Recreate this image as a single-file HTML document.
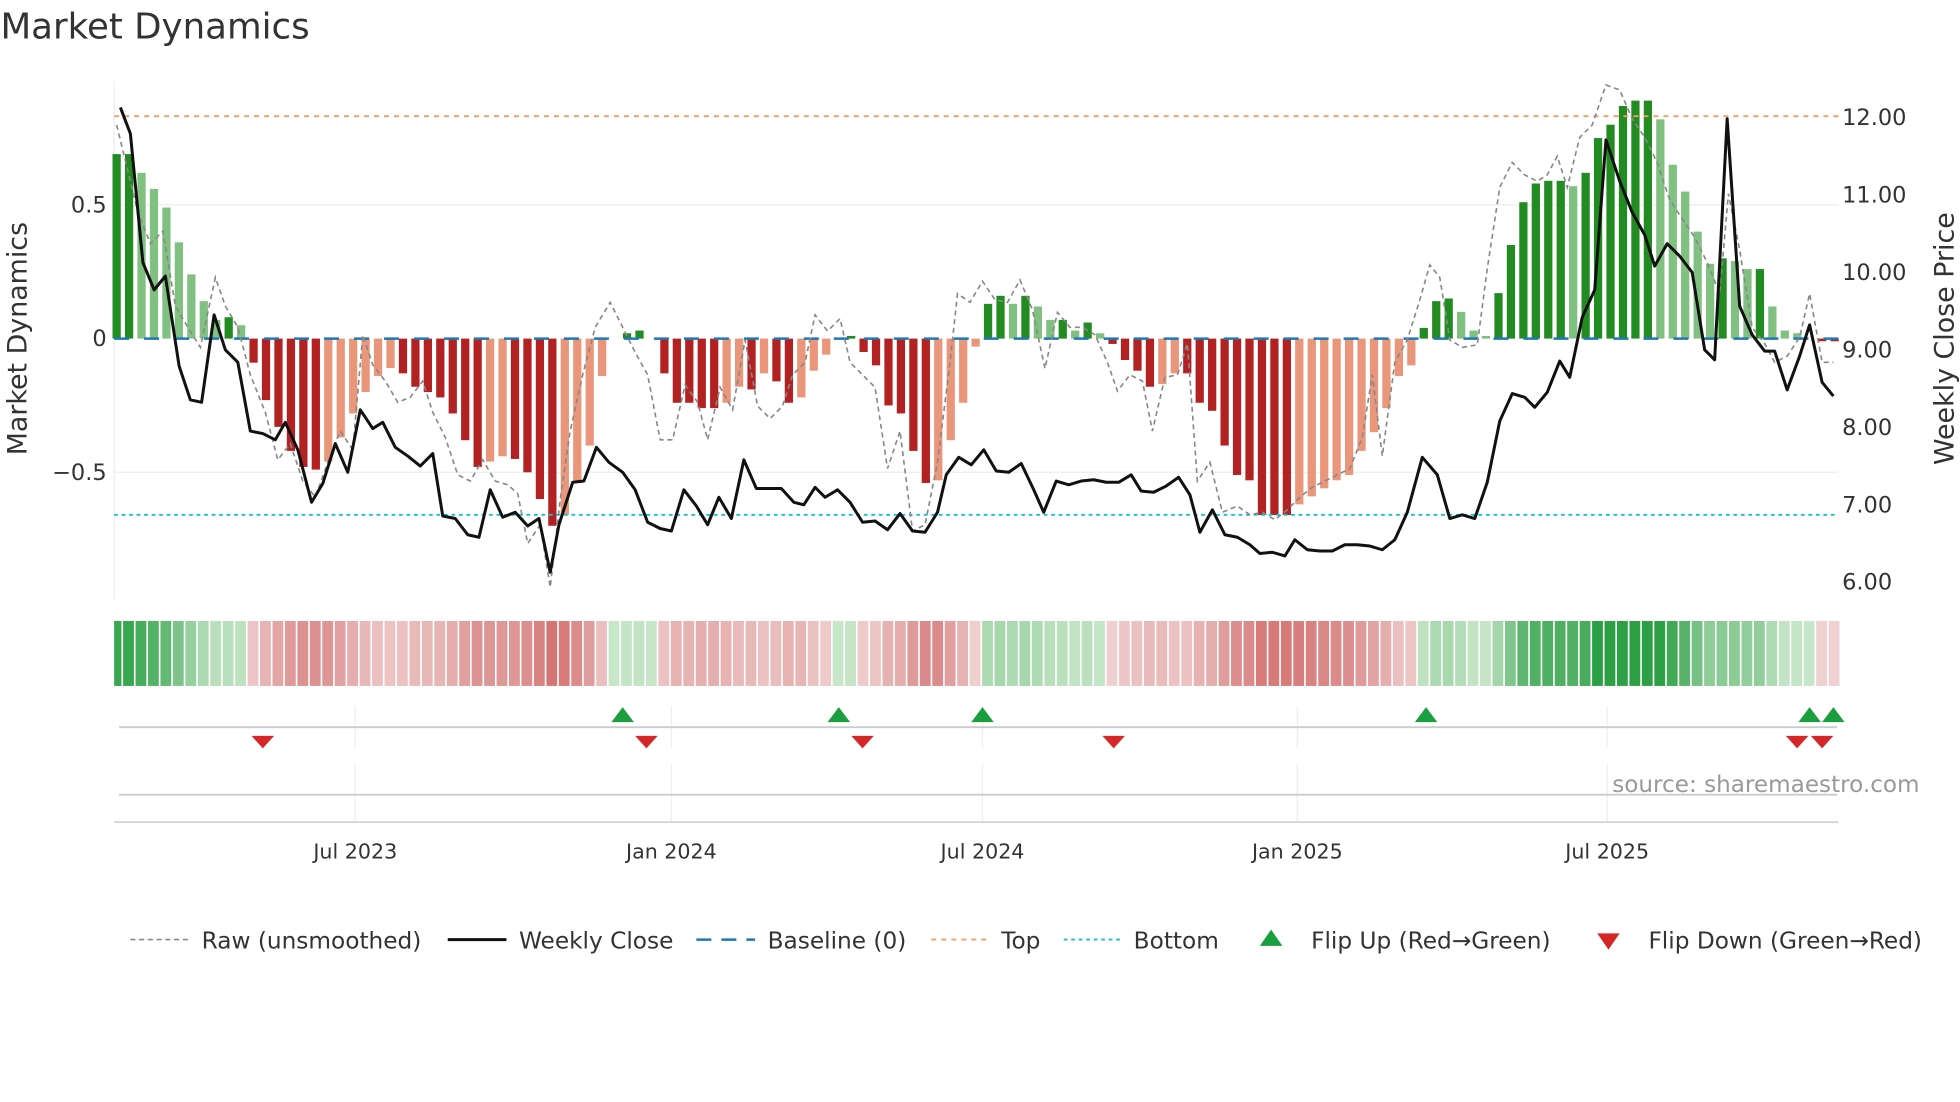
<!DOCTYPE html>
<html><head><meta charset="utf-8"><style>
html,body{margin:0;padding:0;background:#fff;width:1960px;height:1102px;overflow:hidden}
svg{display:block}
text{font-family:"DejaVu Sans","Liberation Sans",sans-serif;fill:#333}
</style></head><body>
<svg id="s" width="1960" height="1102" viewBox="0 0 1568 882">
<text x="0" y="31" font-size="28.5">Market Dynamics</text>
<line x1="91" y1="65" x2="91" y2="480" stroke="#eee"/>
<line x1="91" y1="164" x2="1471" y2="164" stroke="#eee"/>
<line x1="91" y1="378" x2="1471" y2="378" stroke="#eee"/>
<g id="bars"></g>
<line x1="91" y1="93" x2="1471" y2="93" stroke="#f0a060" stroke-width="1.5" stroke-dasharray="4 4"/>
<line x1="91" y1="412" x2="1471" y2="412" stroke="#17becf" stroke-width="1.5" stroke-dasharray="3 3"/>
<line x1="91" y1="271" x2="1471" y2="271" stroke="#1f77b4" stroke-width="2" stroke-dasharray="12 12"/>
<polyline id="raw" fill="none" stroke="#888" stroke-width="1.3" stroke-dasharray="4 3"/>
<polyline id="px" fill="none" stroke="#111" stroke-width="2.4" stroke-linejoin="round"/>
<g font-size="18" text-anchor="end">
<text x="85" y="170">0.5</text><text x="85" y="277">0</text><text x="85" y="384">−0.5</text></g>
<g font-size="18">
<text x="1474" y="100">12.00</text><text x="1474" y="162">11.00</text><text x="1474" y="224">10.00</text>
<text x="1474" y="286">9.00</text><text x="1474" y="348">8.00</text><text x="1474" y="410">7.00</text><text x="1474" y="472">6.00</text></g>
<text transform="translate(21,271) rotate(-90)" font-size="21.5" text-anchor="middle">Market Dynamics</text>
<text transform="translate(1563,271) rotate(-90)" font-size="21.5" text-anchor="middle">Weekly Close Price</text>
<g id="heat"></g>
<g stroke="#eee"><line x1="284" y1="565" x2="284" y2="598"/><line x1="537" y1="565" x2="537" y2="598"/><line x1="786" y1="565" x2="786" y2="598"/><line x1="1038" y1="565" x2="1038" y2="598"/><line x1="1286" y1="565" x2="1286" y2="598"/>
<line x1="284" y1="612" x2="284" y2="658"/><line x1="537" y1="612" x2="537" y2="658"/><line x1="786" y1="612" x2="786" y2="658"/><line x1="1038" y1="612" x2="1038" y2="658"/><line x1="1286" y1="612" x2="1286" y2="658"/></g>
<line x1="95" y1="582" x2="1470" y2="582" stroke="#ccc" stroke-width="1.5"/>
<line x1="95" y1="636" x2="1470" y2="636" stroke="#ccc" stroke-width="1.5"/>
<line x1="91" y1="658" x2="1471" y2="658" stroke="#ccc" stroke-width="1.2"/>
<g id="flips"></g>
<text x="1536" y="634" font-size="18.5" text-anchor="end" style="fill:#999">source: sharemaestro.com</text>
<g font-size="16.5" text-anchor="middle">
<text x="284" y="687">Jul 2023</text><text x="537" y="687">Jan 2024</text><text x="786" y="687">Jul 2024</text><text x="1038" y="687">Jan 2025</text><text x="1286" y="687">Jul 2025</text></g>
<g font-size="18.6">
<line x1="104" y1="752" x2="150" y2="752" stroke="#888" stroke-width="1.3" stroke-dasharray="4 3"/><text x="161" y="759">Raw (unsmoothed)</text>
<line x1="358" y1="752" x2="405" y2="752" stroke="#111" stroke-width="2.4"/><text x="415" y="759">Weekly Close</text>
<line x1="557" y1="752" x2="604" y2="752" stroke="#1f77b4" stroke-width="2" stroke-dasharray="12 8"/><text x="614" y="759">Baseline (0)</text>
<line x1="745" y1="752" x2="791" y2="752" stroke="#f0a060" stroke-width="1.5" stroke-dasharray="4 4"/><text x="801" y="759">Top</text>
<line x1="851" y1="752" x2="897" y2="752" stroke="#17becf" stroke-width="1.5" stroke-dasharray="3 3"/><text x="907" y="759">Bottom</text>
<polygon points="1008,757 1026,757 1017,744" fill="#1a9e40"/><text x="1049" y="759">Flip Up (Red→Green)</text>
<polygon points="1278,747 1296,747 1287,760" fill="#d62728"/><text x="1319" y="759">Flip Down (Green→Red)</text>
</g>
</svg>
<script>
var v=[0.69,0.69,0.62,0.56,0.49,0.36,0.24,0.14,0.07,0.08,0.05,-0.09,-0.23,-0.33,-0.42,-0.48,-0.49,-0.46,-0.37,-0.28,-0.2,-0.14,-0.11,-0.13,-0.18,-0.2,-0.22,-0.28,-0.38,-0.48,-0.46,-0.44,-0.45,-0.5,-0.6,-0.7,-0.66,-0.53,-0.4,-0.14,0,0.02,0.03,0,-0.13,-0.24,-0.24,-0.26,-0.26,-0.24,-0.18,-0.19,-0.13,-0.16,-0.24,-0.22,-0.12,-0.06,0,0.01,-0.05,-0.1,-0.25,-0.28,-0.42,-0.54,-0.53,-0.38,-0.24,-0.03,0.13,0.16,0.13,0.16,0.12,0.07,0.07,0.03,0.06,0.02,-0.02,-0.08,-0.12,-0.18,-0.17,-0.13,-0.13,-0.24,-0.27,-0.4,-0.51,-0.53,-0.66,-0.66,-0.66,-0.62,-0.59,-0.56,-0.53,-0.51,-0.42,-0.35,-0.26,-0.14,-0.1,0.04,0.14,0.15,0.1,0.03,0.01,0.17,0.35,0.51,0.58,0.59,0.59,0.57,0.62,0.75,0.8,0.87,0.89,0.89,0.82,0.65,0.55,0.4,0.28,0.3,0.29,0.26,0.26,0.12,0.03,0.02,0,-0.01,-0.01];
var n=v.length,x0=93,x1=1468,st=(x1-x0)/(n-1),h='',hh='';
for(var i=0;i<n;i++){var a=v[i],p=i?v[i-1]:0,x=x0+i*st,col;
if(a>=0)col=(a>=p)?'#228b22':'#80c080';else col=(a<=p)?'#b22222':'#e9967a';
var y=271-a*214,t=Math.min(y,271),hgt=Math.abs(a*214);
if(hgt>0.5)h+='<rect x="'+(x-3.3)+'" y="'+t+'" width="6.6" height="'+hgt+'" fill="'+col+'"/>';
var m=Math.min(Math.abs(a)/0.75,1),c;
if(a>=0){c='rgb('+Math.round(200-155*m)+','+Math.round(230-70*m)+','+Math.round(201-131*m)+')';}
else{c='rgb('+Math.round(240-30*m)+','+Math.round(210-100*m)+','+Math.round(210-100*m)+')';}
var hx=Math.max(91,x-4.8);
hh+='<rect x="'+hx+'" y="497" width="'+(x-4.8+st-1.3-hx)+'" height="52" fill="'+c+'"/>';}
document.getElementById('bars').innerHTML=h;document.getElementById('heat').innerHTML=hh;
document.getElementById('px').setAttribute('points',"96,86 104,107 114,210 123,232 132,221 143,293 152,320 161,322 171,252 180,280 190,290 200,345 210,347 220,352 228,338 238,360 249,402 258,387 268,355 278,378 288,328 298,343 306,338 316,358 326,365 336,373 346,363 354,413 364,415 374,428 383,430 392,392 402,414 412,410 422,421 431,415 440,458 447,420 458,386 467,385 477,358 487,370 498,378 508,392 518,418 528,423 537,425 547,392 557,405 566,420 575,398 585,415 595,368 605,391 615,391 625,391 635,402 643,404 652,390 660,398 670,392 680,402 690,418 700,417 710,424 720,411 730,425 740,426 750,410 757,380 767,366 777,372 787,360 797,377 807,378 817,371 827,392 835,410 845,385 855,388 865,385 875,384 885,386 895,386 905,380 913,393 923,394 933,389 943,382 952,396 960,426 970,408 980,428 990,430 1000,436 1008,443 1018,442 1028,445 1036,432 1046,440 1056,441 1066,441 1076,436 1086,436 1096,437 1106,440 1116,432 1126,410 1138,366 1150,380 1160,415 1170,412 1180,415 1190,386 1200,337 1210,315 1220,318 1228,326 1238,314 1248,289 1256,302 1266,254 1276,232 1285,112 1296,145 1306,170 1316,188 1324,213 1334,195 1344,205 1354,218 1364,280 1372,288 1382,95 1392,245 1402,268 1412,281 1420,281 1430,312 1440,285 1448,260 1458,306 1467,317");
document.getElementById('raw').setAttribute('points',"93,100 110,170 120,195 130,185 140,245 150,262 160,278 172,222 180,245 190,262 200,300 212,330 222,368 232,355 242,385 252,398 262,370 272,345 282,360 290,268 298,292 308,305 318,322 328,318 338,305 346,330 356,350 366,380 376,385 386,368 396,385 406,388 414,395 422,435 432,420 440,470 448,400 456,345 466,300 476,262 488,242 498,262 508,282 518,300 528,352 538,352 548,308 558,322 566,352 576,310 586,328 596,272 606,325 616,335 626,325 634,300 644,290 652,252 662,265 672,255 680,290 690,300 700,310 710,375 720,345 730,425 740,420 750,370 760,290 766,235 776,242 786,225 796,240 806,242 816,224 826,248 836,295 846,250 856,262 866,262 876,268 886,290 894,313 904,300 914,305 922,345 932,302 942,300 950,275 958,385 968,370 978,410 990,405 1000,412 1010,410 1020,416 1030,408 1040,398 1050,390 1060,385 1070,380 1080,375 1090,350 1098,300 1106,365 1116,290 1126,272 1136,240 1144,212 1152,222 1160,272 1170,278 1182,276 1190,215 1200,150 1210,130 1220,140 1230,145 1238,140 1246,125 1254,150 1264,110 1274,100 1285,68 1296,72 1306,95 1316,110 1326,130 1336,160 1346,175 1356,190 1366,210 1376,235 1383,155 1392,200 1402,262 1412,275 1420,290 1430,285 1440,270 1448,235 1458,290 1467,290");
var f='';[498,671,786,1141,1448,1467].forEach(function(x){f+='<polygon points="'+(x-9)+',578 '+(x+9)+',578 '+x+',566" fill="#1a9e40"/>';});
[210,517,690,891,1438,1458].forEach(function(x){f+='<polygon points="'+(x-9)+',589 '+(x+9)+',589 '+x+',599" fill="#d62728"/>';});
document.getElementById('flips').innerHTML=f;
</script>
</body></html>
